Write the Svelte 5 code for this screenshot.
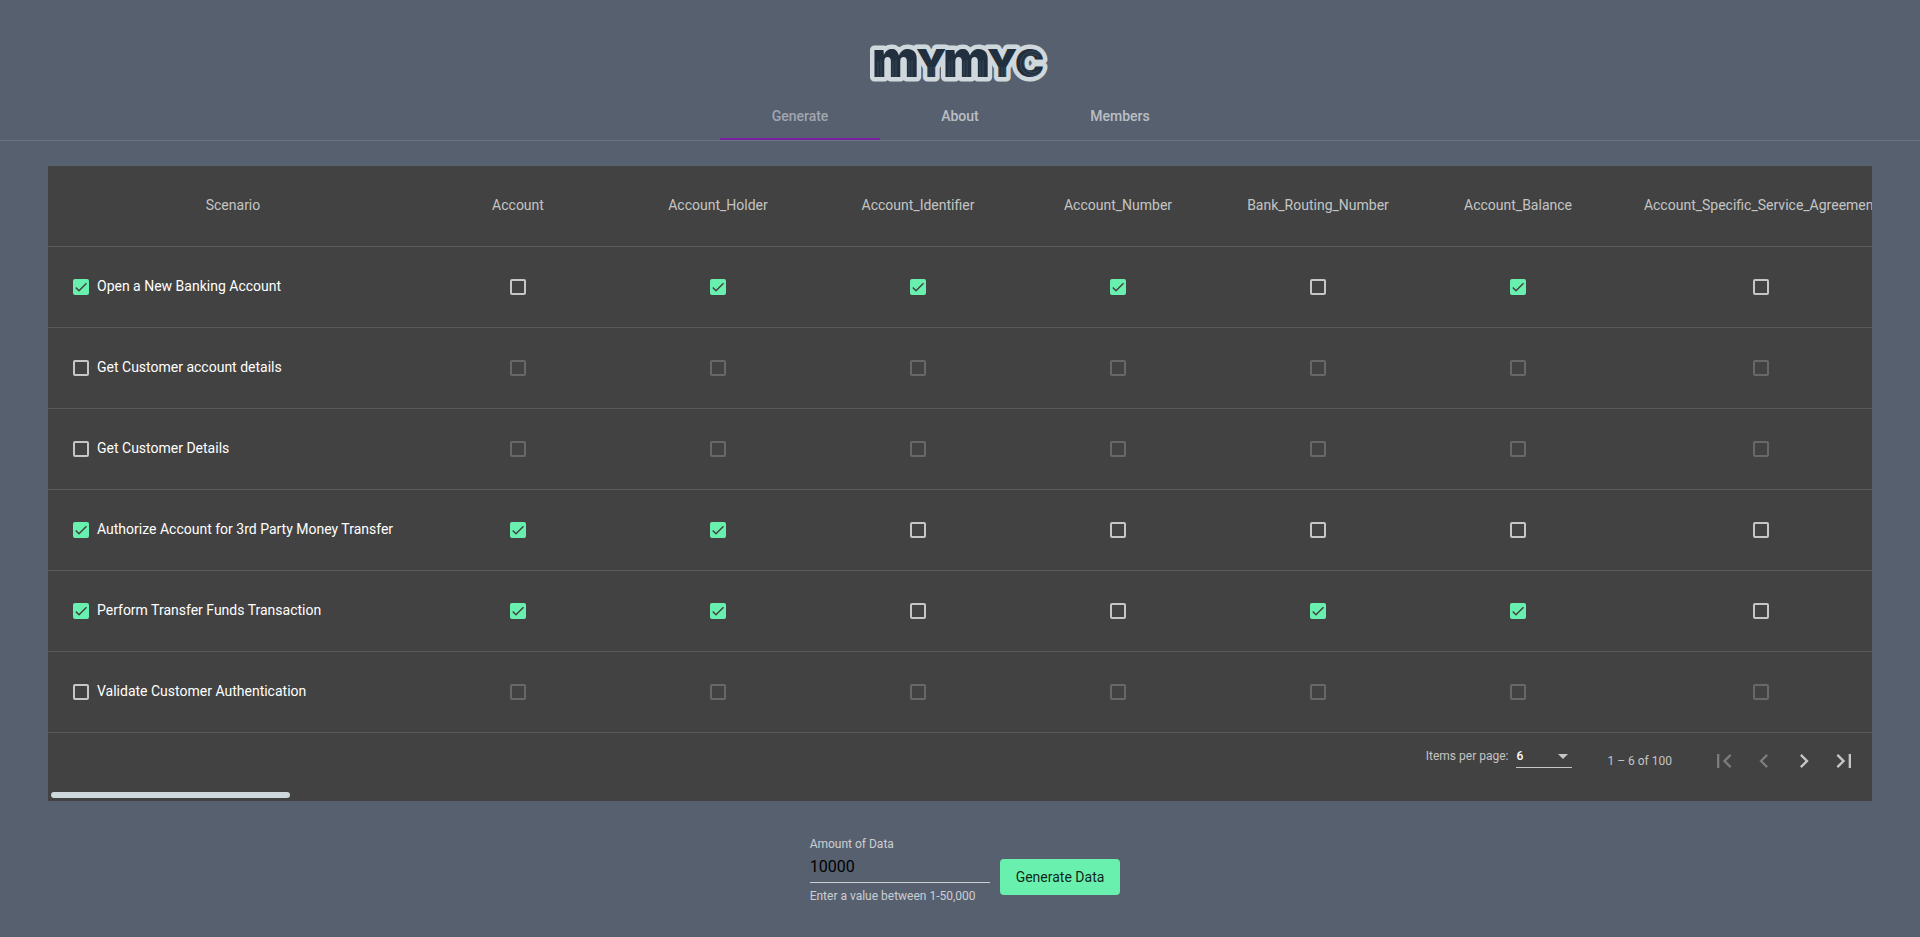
<script>
  const tabs = ['Generate', 'About', 'Members'];
  let activeTab = $state('Generate');

  const columns = [
    'Account',
    'Account_Holder',
    'Account_Identifier',
    'Account_Number',
    'Bank_Routing_Number',
    'Account_Balance',
    'Account_Specific_Service_Agreement'
  ];

  let rows = $state([
    { name: 'Open a New Banking Account', on: true, cells: [false, true, true, true, false, true, false] },
    { name: 'Get Customer account details', on: false, cells: [false, false, false, false, false, false, false] },
    { name: 'Get Customer Details', on: false, cells: [false, false, false, false, false, false, false] },
    { name: 'Authorize Account for 3rd Party Money Transfer', on: true, cells: [true, true, false, false, false, false, false] },
    { name: 'Perform Transfer Funds Transaction', on: true, cells: [true, true, false, false, true, true, false] },
    { name: 'Validate Customer Authentication', on: false, cells: [false, false, false, false, false, false, false] }
  ]);

  const pagerIcons = [
    { name: 'First page', off: true, d: 'M18.41 16.59L13.82 12l4.59-4.59L17 6l-6 6 6 6zM6 6h2v12H6z' },
    { name: 'Previous page', off: true, d: 'M15.41 7.41L14 6l-6 6 6 6 1.41-1.41L10.83 12z' },
    { name: 'Next page', off: false, d: 'M10 6L8.59 7.41 13.17 12l-4.58 4.59L10 18l6-6z' },
    { name: 'Last page', off: false, d: 'M5.59 7.41L10.18 12l-4.59 4.59L7 18l6-6-6-6zM16 6h2v12h-2z' }
  ];

  let amount = $state('10000');
</script>

{#snippet tick()}
  <svg class="tick" viewBox="0 0 24 24" aria-hidden="true"><path d="M4.1 12.7 9 17.6 20.3 6.3" /></svg>
{/snippet}

<header>
  <svg class="logo" viewBox="0 -20 184 80">
    <!-- pale rim behind the letters -->
    <use class="rim" href="#wordmark" />
    <text id="wordmark" y="35"><tspan class="low" x="4">m</tspan><tspan class="cap" x="48">y</tspan><tspan class="low" x="75">m</tspan><tspan class="cap" x="119">y</tspan><tspan class="cap" x="147">c</tspan></text>
    <!-- fine grooves along the strokes of the letters -->
    <g class="groove">
      {#each [0, 71] as dx}
        <g transform="translate({dx} 0)">
          <path d="M10 35V19M13 35V18M25 35V19M28 35V18M41 35V19M44 35V18" />
          <path d="M60 35V25M63 35V25M66 35V25" />
        </g>
      {/each}
      <path d="M173 13a12 12 0 1 0 0 17M171 15a9 9 0 1 0 0 13" />
    </g>
  </svg>
  <nav>
    {#each tabs as tab}
      <button class="tab" class:active={activeTab === tab} onclick={() => (activeTab = tab)}>{tab}</button>
    {/each}
  </nav>
</header>

<main>
  <section class="card">
    <div class="scroller">
      <table>
        <thead>
          <tr>
            <th class="scenario">Scenario</th>
            {#each columns as column, i}
              <th class:wide={i === 6}>{column}</th>
            {/each}
          </tr>
        </thead>
        <tbody>
          {#each rows as row}
            <tr>
              <td class="scenario">
                <label>
                  <span class="box"><input type="checkbox" bind:checked={row.on} />{@render tick()}</span>
                  {row.name}
                </label>
              </td>
              {#each columns as column, i}
                <td>
                  <span class="box">
                    <input type="checkbox" aria-label={column} disabled={!row.on} bind:checked={row.cells[i]} />
                    {@render tick()}
                  </span>
                </td>
              {/each}
            </tr>
          {/each}
        </tbody>
      </table>
    </div>
    <div class="pager">
      <div class="size">
        <label for="page-size">Items per page:</label>
        <span class="select">
          <select id="page-size"><option>6</option><option>12</option><option>24</option></select>
          <svg viewBox="0 0 10 5" aria-hidden="true"><path d="M0 0h10L5 5z" /></svg>
        </span>
      </div>
      <span class="range">1 – 6 of 100</span>
      {#each pagerIcons as icon}
        <button class="step" aria-label={icon.name} disabled={icon.off}>
          <svg viewBox="0 0 24 24" aria-hidden="true"><path d={icon.d} /></svg>
        </button>
      {/each}
    </div>
    <div class="track"><div class="thumb"></div></div>
  </section>

  <form onsubmit={(e) => e.preventDefault()}>
    <div class="field">
      <label for="amount">Amount of Data</label>
      <input id="amount" type="text" inputmode="numeric" bind:value={amount} />
      <span class="hint">Enter a value between 1-50,000</span>
    </div>
    <button class="generate">Generate Data</button>
  </form>
</main>

<style>
  :global(body) {
    background: #57606f;
    color: #fff;
    font: 400 14px/20px Roboto, sans-serif;
  }
  button, input, select {
    font: inherit;
    color: inherit;
    margin: 0;
    padding: 0;
    border: 0;
    border-radius: 0;
    background: none;
    outline: 0;
  }
  header {
    display: flex;
    flex-direction: column;
    align-items: center;
    padding-top: 12px;
    border-bottom: 1px solid rgba(255, 255, 255, 0.12);
  }
  .logo {
    display: block;
    width: 184px;
    height: 80px;
    margin-top: 10px;
    margin-bottom: -10px;
    font-family: Inter, sans-serif;
    font-weight: 900;
    fill: #212f3f;
  }
  .rim {
    fill: #cfd8dc;
    stroke: #cfd8dc;
    stroke-width: 9px;
    stroke-linejoin: round;
  }
  .low { font-size: 50px; }
  .cap { font-size: 39px; text-transform: uppercase; }
  .groove path {
    fill: none;
    stroke: #4b5b68;
    stroke-width: 0.6px;
  }
  nav { display: flex; }
  .tab {
    width: 160px;
    height: 48px;
    font-weight: 500;
    color: rgba(255, 255, 255, 0.6);
    border-bottom: 2px solid transparent;
    border-top: 2px solid transparent;
  }
  .tab.active {
    color: rgba(255, 255, 255, 0.45);
    border-bottom-color: #7b1fa2;
  }
  main { padding: 25px 48px; }
  .card {
    background: #424242;
    overflow: hidden;
  }
  .scroller { overflow: hidden; }
  table {
    width: 1856px;
    table-layout: fixed;
    border-collapse: separate;
    border-spacing: 0;
  }
  th, td {
    height: 78px;
    padding: 0 0 2px;
    text-align: center;
    vertical-align: middle;
    border-bottom: 1px solid rgba(255, 255, 255, 0.12);
  }
  th {
    width: 200px;
    font-weight: 400;
    color: rgba(255, 255, 255, 0.7);
  }
  th.scenario { width: 370px; }
  th.wide { width: 286px; }
  td label {
    display: flex;
    align-items: center;
    gap: 8px;
    padding-left: 25px;
  }
  .box {
    display: inline-grid;
    vertical-align: middle;
  }
  label .box { padding-top: 2px; }
  .box > :global(*) { grid-area: 1 / 1; }
  .box input {
    appearance: none;
    width: 16px;
    height: 16px;
    border: 2px solid rgba(255, 255, 255, 0.7);
    border-radius: 2px;
  }
  .box input:disabled { border-color: #686868; }
  .box input:checked {
    background: #69f0ae;
    border-color: #69f0ae;
  }
  .tick {
    width: 16px;
    height: 16px;
    fill: none;
    stroke: #424242;
    stroke-width: 2.2px;
    visibility: hidden;
    pointer-events: none;
  }
  input:checked + .tick,
  input:checked + :global(.tick) { visibility: visible; }
  .pager {
    display: flex;
    align-items: center;
    justify-content: flex-end;
    height: 56px;
    padding-right: 8px;
    font-size: 12px;
    color: rgba(255, 255, 255, 0.7);
  }
  .size {
    display: flex;
    align-items: center;
    gap: 8px;
    padding-bottom: 10px;
  }
  .select { display: grid; }
  .select > :global(*) { grid-area: 1 / 1; }
  .select select {
    appearance: none;
    width: 56px;
    height: 24px;
    font-weight: 500;
    color: #fff;
    border-bottom: 1px solid rgba(255, 255, 255, 0.7);
  }
  .select svg {
    width: 10px;
    height: 5px;
    margin-right: 4px;
    place-self: center end;
    fill: #c6c6c6;
    pointer-events: none;
  }
  .range { margin: 0 32px 0 35px; }
  .step {
    display: grid;
    place-items: center;
    width: 40px;
    height: 40px;
  }
  .step svg {
    width: 28px;
    height: 28px;
    fill: #c6c6c6;
  }
  .step:disabled svg { fill: #7b7b7b; }
  .track { padding: 3px; }
  .thumb {
    width: 13.15%;
    height: 6px;
    border-radius: 3px;
    background: #cfd8dc;
  }
  form {
    display: flex;
    justify-content: center;
    align-items: center;
    gap: 10px;
    padding: 34px 0 0 10px;
  }
  .field {
    display: flex;
    flex-direction: column;
    width: 180px;
    font-size: 12px;
    color: rgba(255, 255, 255, 0.7);
  }
  .field label { line-height: 18px; }
  .field input {
    height: 26px;
    padding-bottom: 3px;
    font-size: 16px;
    color: #000;
    border-bottom: 1px solid rgba(255, 255, 255, 0.7);
  }
  .hint {
    padding-top: 4px;
    line-height: 18px;
  }
  .generate {
    height: 36px;
    padding: 0 16px;
    margin-top: 14px;
    border-radius: 4px;
    background: #69f0ae;
    color: rgba(0, 0, 0, 0.87);
  }
</style>
